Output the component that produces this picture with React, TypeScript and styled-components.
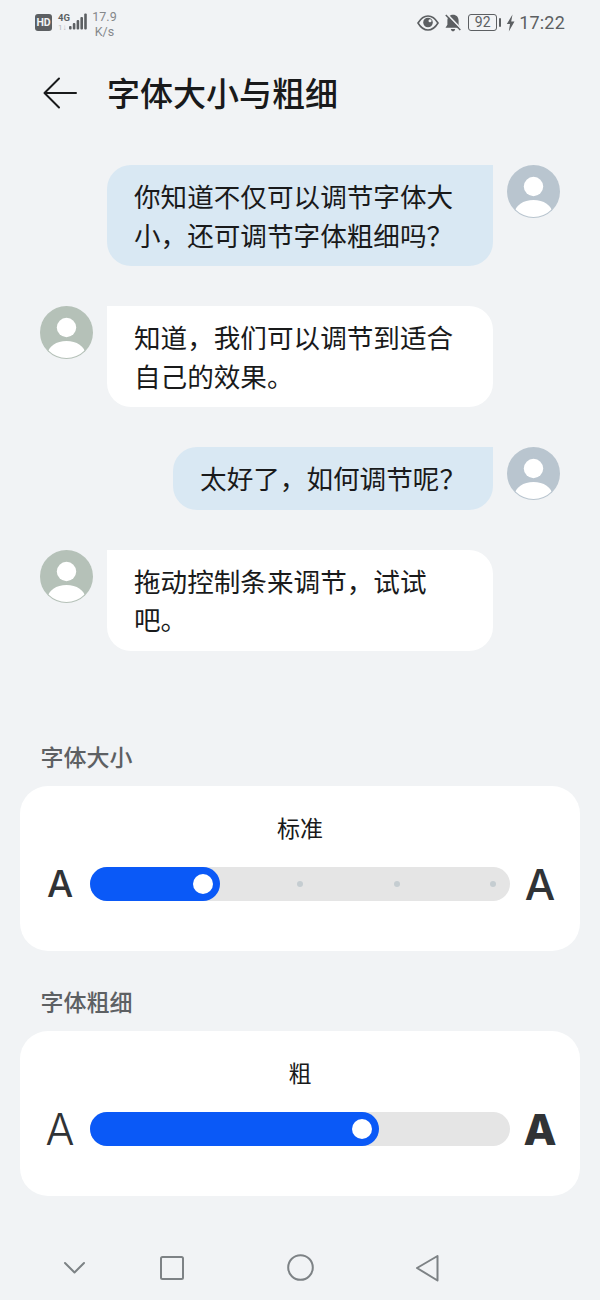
import React from "react";
import styled, { createGlobalStyle } from "styled-components";

const CJK = `"Noto Sans CJK SC", "Noto Sans", sans-serif`;

const Global = createGlobalStyle`
  html, body { margin: 0; padding: 0; background: #f1f3f5; }
  body { font-family: ${CJK}; }
  * { box-sizing: border-box; }
`;

const Page = styled.div`
  width: 600px;
  height: 1300px;
  background: #f1f3f5;
  overflow: hidden;
  display: flex;
  flex-direction: column;
`;

/* Status bar */
const StatusBar = styled.div`
  height: 46px;
  padding: 0 35px;
  display: flex;
  align-items: flex-start;
  justify-content: space-between;
`;
const StatusLeft = styled.div`
  display: flex;
  align-items: flex-start;
  padding-top: 9px;
`;
const HdBadge = styled.div`
  width: 17px;
  height: 17px;
  margin-top: 5px;
  border-radius: 3px;
  background: #5c5f62;
  color: #f1f3f5;
  font: 700 10.5px/17px "Roboto", sans-serif;
  text-align: center;
`;
const NetStack = styled.div`
  width: 11px;
  margin: 4px 0 0 6px;
  display: flex;
  flex-direction: column;
  font-family: "Roboto", sans-serif;
`;
const NetType = styled.span`
  font-size: 9.5px;
  line-height: 10px;
  font-weight: 700;
  color: #5c5f62;
  white-space: nowrap;
`;
const NetArrows = styled.span`
  font-size: 8px;
  line-height: 10px;
  color: #b4b7ba;
`;
const Speed = styled.div`
  width: 33px;
  margin-left: 1px;
  color: #85888b;
  font: 400 12.5px/15px "Roboto", sans-serif;
  text-align: center;
`;
const StatusRight = styled.div`
  display: flex;
  align-items: center;
  height: 46px;
  padding-bottom: 1px;
`;
const BatteryBox = styled.div`
  width: 29px;
  height: 17px;
  margin-left: 6px;
  border: 1.5px solid #5c5f62;
  border-radius: 3px;
  color: #5c5f62;
  font: 400 14px/14px "Roboto", sans-serif;
  text-align: center;
`;
const BatteryNub = styled.div`
  width: 2px;
  height: 9px;
  margin-left: 2px;
  border-radius: 1px;
  background: #5c5f62;
`;
const Clock = styled.div`
  margin-left: 4px;
  color: #5c5f62;
  font: 400 18px/22px "Roboto", sans-serif;
  letter-spacing: 0.2px;
`;

/* Header */
const Header = styled.div`
  height: 94px;
  padding-left: 43px;
  display: flex;
  align-items: center;
  gap: 30px;
`;
const Title = styled.h1`
  margin: 0 0 3px;
  color: #191a1b;
  font-size: 33px;
  font-weight: 500;
  line-height: 44px;
`;

/* Chat */
const Chat = styled.div`
  margin-top: 25px;
  padding: 0 40px;
  display: flex;
  flex-direction: column;
  gap: 40px;
`;
const Row = styled.div<{ $mine?: boolean }>`
  display: flex;
  flex-direction: ${(p) => (p.$mine ? "row-reverse" : "row")};
  align-items: flex-start;
  gap: 14px;
`;
const Bubble = styled.div<{ $mine?: boolean }>`
  max-width: 386px;
  padding: 12px 27px;
  background: ${(p) => (p.$mine ? "#d9e8f3" : "#ffffff")};
  border-radius: ${(p) => (p.$mine ? "24px 0 24px 24px" : "0 24px 24px 24px")};
  color: #191a1b;
  font-size: 26.6px;
  line-height: 38.5px;
`;

/* Sections */
const SectionLabel = styled.div<{ $top: number }>`
  margin: ${(p) => p.$top}px 0 15px 40.500px;
  color: #5d6063;
  font-size: 23px;
  font-weight: 500;
  line-height: 30px;
`;
const Card = styled.div`
  margin: 0 20px;
  height: 165px;
  padding: 26px 10px 0;
  background: #ffffff;
  border-radius: 28px;
`;
const LevelName = styled.div`
  color: #191a1b;
  font-size: 23px;
  line-height: 30px;
  text-align: center;
`;
const SliderRow = styled.div`
  margin-top: 25px;
  display: grid;
  grid-template-columns: 60px 420px 60px;
  align-items: center;
`;
const Glyph = styled.span<{ $size: number; $weight: number }>`
  color: #303336;
  font-family: "Inter", "Roboto", sans-serif;
  font-size: ${(p) => p.$size}px;
  font-weight: ${(p) => p.$weight};
  line-height: 34px;
  text-align: center;
`;
const Track = styled.div`
  position: relative;
  height: 34px;
  border-radius: 17px;
  background: #e5e5e5;
`;
const Fill = styled.div<{ $width: number }>`
  position: absolute;
  left: 0;
  top: 0;
  width: ${(p) => p.$width}px;
  height: 34px;
  border-radius: 17px;
  background: #0a59f7;
`;
const Knob = styled.div`
  position: absolute;
  right: 7px;
  top: 7px;
  width: 20px;
  height: 20px;
  border-radius: 50%;
  background: #ffffff;
`;
const Tick = styled.div<{ $left: number }>`
  position: absolute;
  left: ${(p) => p.$left}px;
  top: 14px;
  width: 6px;
  height: 6px;
  border-radius: 50%;
  background: #c5cdd1;
`;

/* Nav */
const NavBar = styled.div`
  margin-top: 44px;
  height: 56px;
  padding-left: 26px;
  display: grid;
  grid-template-columns: 97px 97px 160px 94px;
  justify-items: center;
  align-items: center;
`;

const Avatar = ({ color }: { color: string }) => (
  <svg width="53" height="53" viewBox="0 0 53 53" style={{ flex: "none" }}>
    <defs>
      <clipPath id={`c${color.slice(1)}`}>
        <circle cx="26.500" cy="26.500" r="25.500" />
      </clipPath>
    </defs>
    <circle cx="26.500" cy="26.500" r="26.500" fill={color} />
    <g clipPath={`url(#c${color.slice(1)})`}>
      <circle cx="26.500" cy="21.500" r="9.700" fill="#ffffff" />
      <ellipse cx="26.500" cy="47.500" rx="18.500" ry="12.500" fill="#ffffff" />
    </g>
  </svg>
);

const Slider = ({
  width,
  ticks,
  left,
  right,
}: {
  width: number;
  ticks: number[];
  left: [number, number];
  right: [number, number];
}) => (
  <SliderRow>
    <Glyph $size={left[0]} $weight={left[1]}>A</Glyph>
    <Track>
      {ticks.map((t) => (
        <Tick key={t} $left={t} />
      ))}
      <Fill $width={width}>
        <Knob />
      </Fill>
    </Track>
    <Glyph $size={right[0]} $weight={right[1]}>A</Glyph>
  </SliderRow>
);

export default function App() {
  return (
    <Page lang="zh-CN">
      <Global />
      <StatusBar>
        <StatusLeft>
          <HdBadge>HD</HdBadge>
          <NetStack>
            <NetType>4G</NetType>
            <NetArrows>1↓</NetArrows>
          </NetStack>
          <svg width="18" height="18" viewBox="0 0 18 18" style={{ marginTop: 4 }}>
            <g fill="#5c5f62">
              <rect x="0" y="13" width="2.600" height="3.500" rx="1" />
              <rect x="3.800" y="10" width="2.600" height="6.500" rx="1" />
              <rect x="7.600" y="7" width="2.600" height="9.500" rx="1" />
              <rect x="11.400" y="4" width="2.600" height="12.500" rx="1" />
              <rect x="15.200" y="0.500" width="2.600" height="16" rx="1" />
            </g>
          </svg>
          <Speed>
            17.9
            <br />
            K/s
          </Speed>
        </StatusLeft>
        <StatusRight>
          <svg width="22" height="16" viewBox="0 0 22 16">
            <path d="M1 8C4 3 7.500 1 11 1s7 2 10 7c-3 5-6.500 7-10 7S4 13 1 8Z" fill="none" stroke="#5c5f62" strokeWidth="1.600" />
            <circle cx="11" cy="7.500" r="4.800" fill="#5c5f62" />
            <circle cx="13" cy="5.800" r="1.500" fill="#f1f3f5" />
          </svg>
          <svg width="18" height="18" viewBox="0 0 18 18" style={{ marginLeft: 5 }}>
            <path d="M9 .8C5.600.8 3.400 3.200 3.400 6.500v4.300L1.500 13.800h15l-1.900-3V6.500C14.600 3.200 12.400.8 9 .8Z" fill="#5c5f62" />
            <path d="M6.800 15h4.400c-.3 1.500-1.100 2.300-2.200 2.300S7.100 16.500 6.800 15Z" fill="#5c5f62" />
            <path d="M3 .2 17.500 15.200" stroke="#f1f3f5" strokeWidth="1.800" />
            <path d="M1.800 1 16.300 16" stroke="#5c5f62" strokeWidth="1.500" />
          </svg>
          <BatteryBox>92</BatteryBox>
          <BatteryNub />
          <svg width="9" height="18" viewBox="0 0 9 18" style={{ marginLeft: 5 }}>
            <path d="M6.500 .5 .8 10h3.200L2.800 17.500 8.500 7.500H5.200L6.500 .5Z" fill="#5c5f62" />
          </svg>
          <Clock>17:22</Clock>
        </StatusRight>
      </StatusBar>

      <Header>
        <svg width="34" height="32" viewBox="0 0 34 32">
          <path d="M33 16H2M16 1.500 1.500 16 16 30.500" fill="none" stroke="#191a1b" strokeWidth="2" strokeLinecap="round" strokeLinejoin="round" />
        </svg>
        <Title>字体大小与粗细</Title>
      </Header>

      <Chat>
        <Row $mine>
          <Avatar color="#b9c5cf" />
          <Bubble $mine>你知道不仅可以调节字体大小，还可调节字体粗细吗？</Bubble>
        </Row>
        <Row>
          <Avatar color="#b5c1b8" />
          <Bubble>知道，我们可以调节到适合自己的效果。</Bubble>
        </Row>
        <Row $mine>
          <Avatar color="#b9c5cf" />
          <Bubble $mine>太好了，如何调节呢？</Bubble>
        </Row>
        <Row>
          <Avatar color="#b5c1b8" />
          <Bubble>拖动控制条来调节，试试吧。</Bubble>
        </Row>
      </Chat>

      <SectionLabel $top={90}>字体大小</SectionLabel>
      <Card>
        <LevelName>标准</LevelName>
        <Slider width={130} ticks={[207, 303.5, 400]} left={[37, 500]} right={[43, 500]} />
      </Card>

      <SectionLabel $top={35}>字体粗细</SectionLabel>
      <Card>
        <LevelName>粗</LevelName>
        <Slider width={289} ticks={[]} left={[43, 300]} right={[43, 800]} />
      </Card>

      <NavBar>
        <svg width="23" height="13" viewBox="0 0 23 13">
          <path d="M2 2l9.500 9.500L21 2" fill="none" stroke="#7d8285" strokeWidth="2" strokeLinecap="round" strokeLinejoin="round" />
        </svg>
        <svg width="24" height="24" viewBox="0 0 24 24">
          <rect x="1" y="1" width="22" height="22" rx="1.500" fill="none" stroke="#7d8285" strokeWidth="2" />
        </svg>
        <svg width="27" height="27" viewBox="0 0 27 27">
          <circle cx="13.500" cy="13.500" r="12.300" fill="none" stroke="#7d8285" strokeWidth="2" />
        </svg>
        <svg width="24" height="28" viewBox="0 0 24 28">
          <path d="M22.500 2 2 14l20.500 12.500Z" fill="none" stroke="#7d8285" strokeWidth="2" strokeLinejoin="round" />
        </svg>
      </NavBar>
    </Page>
  );
}
